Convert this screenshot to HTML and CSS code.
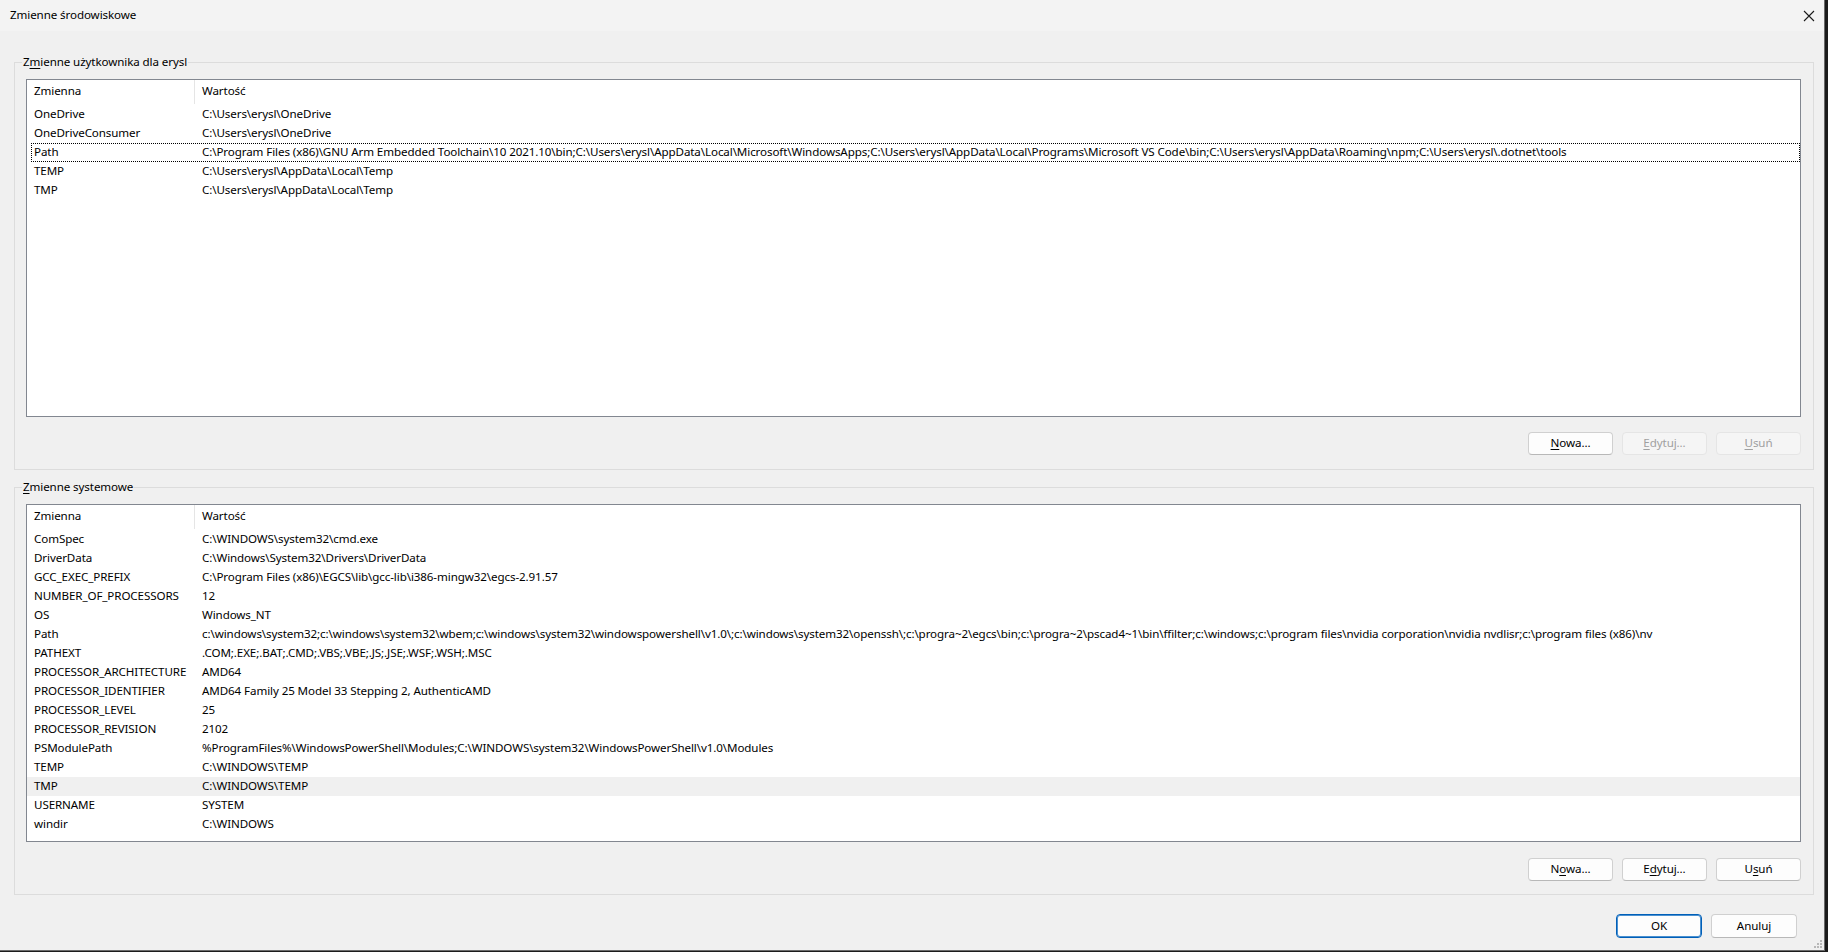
FILE: index.html
```html
<!DOCTYPE html>
<html lang="pl">
<head>
    <meta charset="UTF-8">
    <title>Zmienne środowiskowe</title>
    <link rel="stylesheet" href="styles.css">
</head>
<body>
    <div class="window">
        <div class="titlebar">
            <span class="title">Zmienne środowiskowe</span>
            <span class="close">
                <svg width="12" height="12" viewBox="0 0 12 12"><path d="M1 1L11 11M11 1L1 11" stroke="#1a1a1a" stroke-width="1.1" fill="none"/></svg>
            </span>
        </div>

        <div class="content">
            <!-- zmienne uzytkownika -->
            <fieldset class="group">
                <legend>Z<u>m</u>ienne użytkownika dla erysl</legend>
                <div class="listview user-list">
                    <div class="lv-header">
                        <div class="col-name">Zmienna</div>
                        <div class="col-value">Wartość</div>
                    </div>
                    <div class="lv-row"><div class="col-name">OneDrive</div><div class="col-value">C:\Users\erysl\OneDrive</div></div>
                    <div class="lv-row"><div class="col-name">OneDriveConsumer</div><div class="col-value">C:\Users\erysl\OneDrive</div></div>
                    <div class="lv-row focused"><div class="col-name">Path</div><div class="col-value">C:\Program Files (x86)\GNU Arm Embedded Toolchain\10 2021.10\bin;C:\Users\erysl\AppData\Local\Microsoft\WindowsApps;C:\Users\erysl\AppData\Local\Programs\Microsoft VS Code\bin;C:\Users\erysl\AppData\Roaming\npm;C:\Users\erysl\.dotnet\tools</div></div>
                    <div class="lv-row"><div class="col-name">TEMP</div><div class="col-value">C:\Users\erysl\AppData\Local\Temp</div></div>
                    <div class="lv-row"><div class="col-name">TMP</div><div class="col-value">C:\Users\erysl\AppData\Local\Temp</div></div>
                </div>
                <div class="btn-row">
                    <button class="btn"><u>N</u>owa...</button>
                    <button class="btn" disabled><u>E</u>dytuj...</button>
                    <button class="btn" disabled><u>U</u>suń</button>
                </div>
            </fieldset>

            <!-- zmienne systemowe -->
            <fieldset class="group group-system">
                <legend><u>Z</u>mienne systemowe</legend>
                <div class="listview system-list">
                    <div class="lv-header">
                        <div class="col-name">Zmienna</div>
                        <div class="col-value">Wartość</div>
                    </div>
                    <div class="lv-row"><div class="col-name">ComSpec</div><div class="col-value">C:\WINDOWS\system32\cmd.exe</div></div>
                    <div class="lv-row"><div class="col-name">DriverData</div><div class="col-value">C:\Windows\System32\Drivers\DriverData</div></div>
                    <div class="lv-row"><div class="col-name">GCC_EXEC_PREFIX</div><div class="col-value">C:\Program Files (x86)\EGCS\lib\gcc-lib\i386-mingw32\egcs-2.91.57</div></div>
                    <div class="lv-row"><div class="col-name">NUMBER_OF_PROCESSORS</div><div class="col-value">12</div></div>
                    <div class="lv-row"><div class="col-name">OS</div><div class="col-value">Windows_NT</div></div>
                    <div class="lv-row"><div class="col-name">Path</div><div class="col-value">c:\windows\system32;c:\windows\system32\wbem;c:\windows\system32\windowspowershell\v1.0\;c:\windows\system32\openssh\;c:\progra~2\egcs\bin;c:\progra~2\pscad4~1\bin\ffilter;c:\windows;c:\program files\nvidia corporation\nvidia nvdlisr;c:\program files (x86)\nv</div></div>
                    <div class="lv-row"><div class="col-name">PATHEXT</div><div class="col-value">.COM;.EXE;.BAT;.CMD;.VBS;.VBE;.JS;.JSE;.WSF;.WSH;.MSC</div></div>
                    <div class="lv-row"><div class="col-name">PROCESSOR_ARCHITECTURE</div><div class="col-value">AMD64</div></div>
                    <div class="lv-row"><div class="col-name">PROCESSOR_IDENTIFIER</div><div class="col-value">AMD64 Family 25 Model 33 Stepping 2, AuthenticAMD</div></div>
                    <div class="lv-row"><div class="col-name">PROCESSOR_LEVEL</div><div class="col-value">25</div></div>
                    <div class="lv-row"><div class="col-name">PROCESSOR_REVISION</div><div class="col-value">2102</div></div>
                    <div class="lv-row"><div class="col-name">PSModulePath</div><div class="col-value">%ProgramFiles%\WindowsPowerShell\Modules;C:\WINDOWS\system32\WindowsPowerShell\v1.0\Modules</div></div>
                    <div class="lv-row"><div class="col-name">TEMP</div><div class="col-value">C:\WINDOWS\TEMP</div></div>
                    <div class="lv-row hover"><div class="col-name">TMP</div><div class="col-value">C:\WINDOWS\TEMP</div></div>
                    <div class="lv-row"><div class="col-name">USERNAME</div><div class="col-value">SYSTEM</div></div>
                    <div class="lv-row"><div class="col-name">windir</div><div class="col-value">C:\WINDOWS</div></div>
                </div>
                <div class="btn-row">
                    <button class="btn">N<u>o</u>wa...</button>
                    <button class="btn">E<u>d</u>ytuj...</button>
                    <button class="btn">U<u>s</u>uń</button>
                </div>
            </fieldset>

            <div class="footer">
                <button class="btn btn-default">OK</button>
                <button class="btn">Anuluj</button>
            </div>
        </div>

        <svg class="grip" width="10" height="10" viewBox="0 0 10 10">
            <rect x="7" y="1" width="2" height="2" fill="#b8b8b8"/>
            <rect x="4" y="4" width="2" height="2" fill="#b8b8b8"/>
            <rect x="7" y="4" width="2" height="2" fill="#b8b8b8"/>
            <rect x="1" y="7" width="2" height="2" fill="#b8b8b8"/>
            <rect x="4" y="7" width="2" height="2" fill="#b8b8b8"/>
            <rect x="7" y="7" width="2" height="2" fill="#b8b8b8"/>
        </svg>
    </div>
</body>
</html>
```

FILE: styles.css
```css
/* okno dialogowe */
body {
    margin: 0;
    padding: 0;
    background-color: #1c1c1c;
    font-family: "Noto Sans", "Open Sans", sans-serif;
    font-size: 11.6px;
    letter-spacing: -0.1px;
    color: #000;
}
.window {
    position: relative;
    width: 1825px;
    height: 951px;
    background-color: #f0f0f0;
    border-bottom: 1px solid #6b6b6b;
    border-right: 1px solid #6b6b6b;
    box-sizing: border-box;
    display: flex;
    flex-direction: column;
    overflow: hidden;
}
.titlebar {
    height: 31px;
    background-color: #f3f3f3;
    display: flex;
    align-items: center;
    justify-content: space-between;
    padding-left: 10px;
    flex-shrink: 0;
}
.title {
    padding-bottom: 2px;
}
.close {
    width: 46px;
    height: 31px;
    display: flex;
    align-items: center;
    justify-content: center;
    margin-right: -8px;
}
.content {
    display: flex;
    flex-direction: column;
    padding: 0 10px 0 14px;
}
/* grupy */
.group {
    margin: 23px 0 0 0;
    padding: 8px 12px 14px 11px;
    border: 1px solid #dcdcdc;
    min-width: 0;
}
.group-system {
    margin-top: 9px;
    padding-top: 8px;
    padding-bottom: 13px;
}
.group legend {
    padding: 0 1px 2px 1px;
    margin-left: -4px;
    line-height: 15px;
}
.group legend u,
.btn u {
    text-decoration-thickness: 1px;
    text-underline-offset: 2px;
}
/* lista zmiennych */
.listview {
    background-color: #fff;
    border: 1px solid #828790;
    overflow: hidden;
    box-sizing: border-box;
}
.user-list {
    height: 338px;
}
.system-list {
    height: 338px;
}
.lv-header {
    display: flex;
    height: 25px;
    align-items: flex-start;
}
.lv-header .col-name {
    border-right: 1px solid #e5e5e5;
    height: 24px;
}
.lv-header .col-name,
.lv-header .col-value {
    line-height: 22px;
    padding-bottom: 2px;
    box-sizing: border-box;
}
.lv-row {
    position: relative;
    display: flex;
    height: 19px;
    line-height: 17px;
    padding-bottom: 2px;
    box-sizing: border-box;
}
.lv-row.hover {
    background-color: #f0f0f0;
}
.lv-row.focused::after {
    content: "";
    position: absolute;
    top: 0;
    bottom: 0;
    left: 4px;
    right: 0;
    border: 1px dotted #000;
}
.col-name {
    width: 168px;
    padding-left: 7px;
    box-sizing: border-box;
    flex-shrink: 0;
    white-space: nowrap;
}
.col-value {
    padding-left: 7px;
    white-space: nowrap;
}
/* przyciski */
.btn-row {
    display: flex;
    justify-content: flex-end;
    gap: 9px;
    margin-top: 15px;
}
.group-system .btn-row {
    margin-top: 16px;
}
.btn {
    width: 85px;
    height: 23px;
    padding: 0 0 2px 0;
    font-family: "Noto Sans", "Open Sans", sans-serif;
    font-size: 11.6px;
    letter-spacing: -0.1px;
    color: #000;
    background-color: #fdfdfd;
    border: 1px solid #d0d0d0;
    border-bottom-color: #b8b8b8;
    border-radius: 4px;
}
.btn:disabled {
    background-color: #f5f5f5;
    border-color: #e5e5e5;
    color: #a0a0a0;
}
.footer {
    display: flex;
    justify-content: flex-end;
    gap: 9px;
    margin-top: 19px;
    padding-right: 17px;
}
.footer .btn {
    width: 86px;
    height: 24px;
}
.btn-default {
    border: 1px solid #005fb8;
    box-shadow: inset 0 0 0 1px #4a90d0;
}
.grip {
    position: absolute;
    right: 1px;
    bottom: 1px;
}
```
